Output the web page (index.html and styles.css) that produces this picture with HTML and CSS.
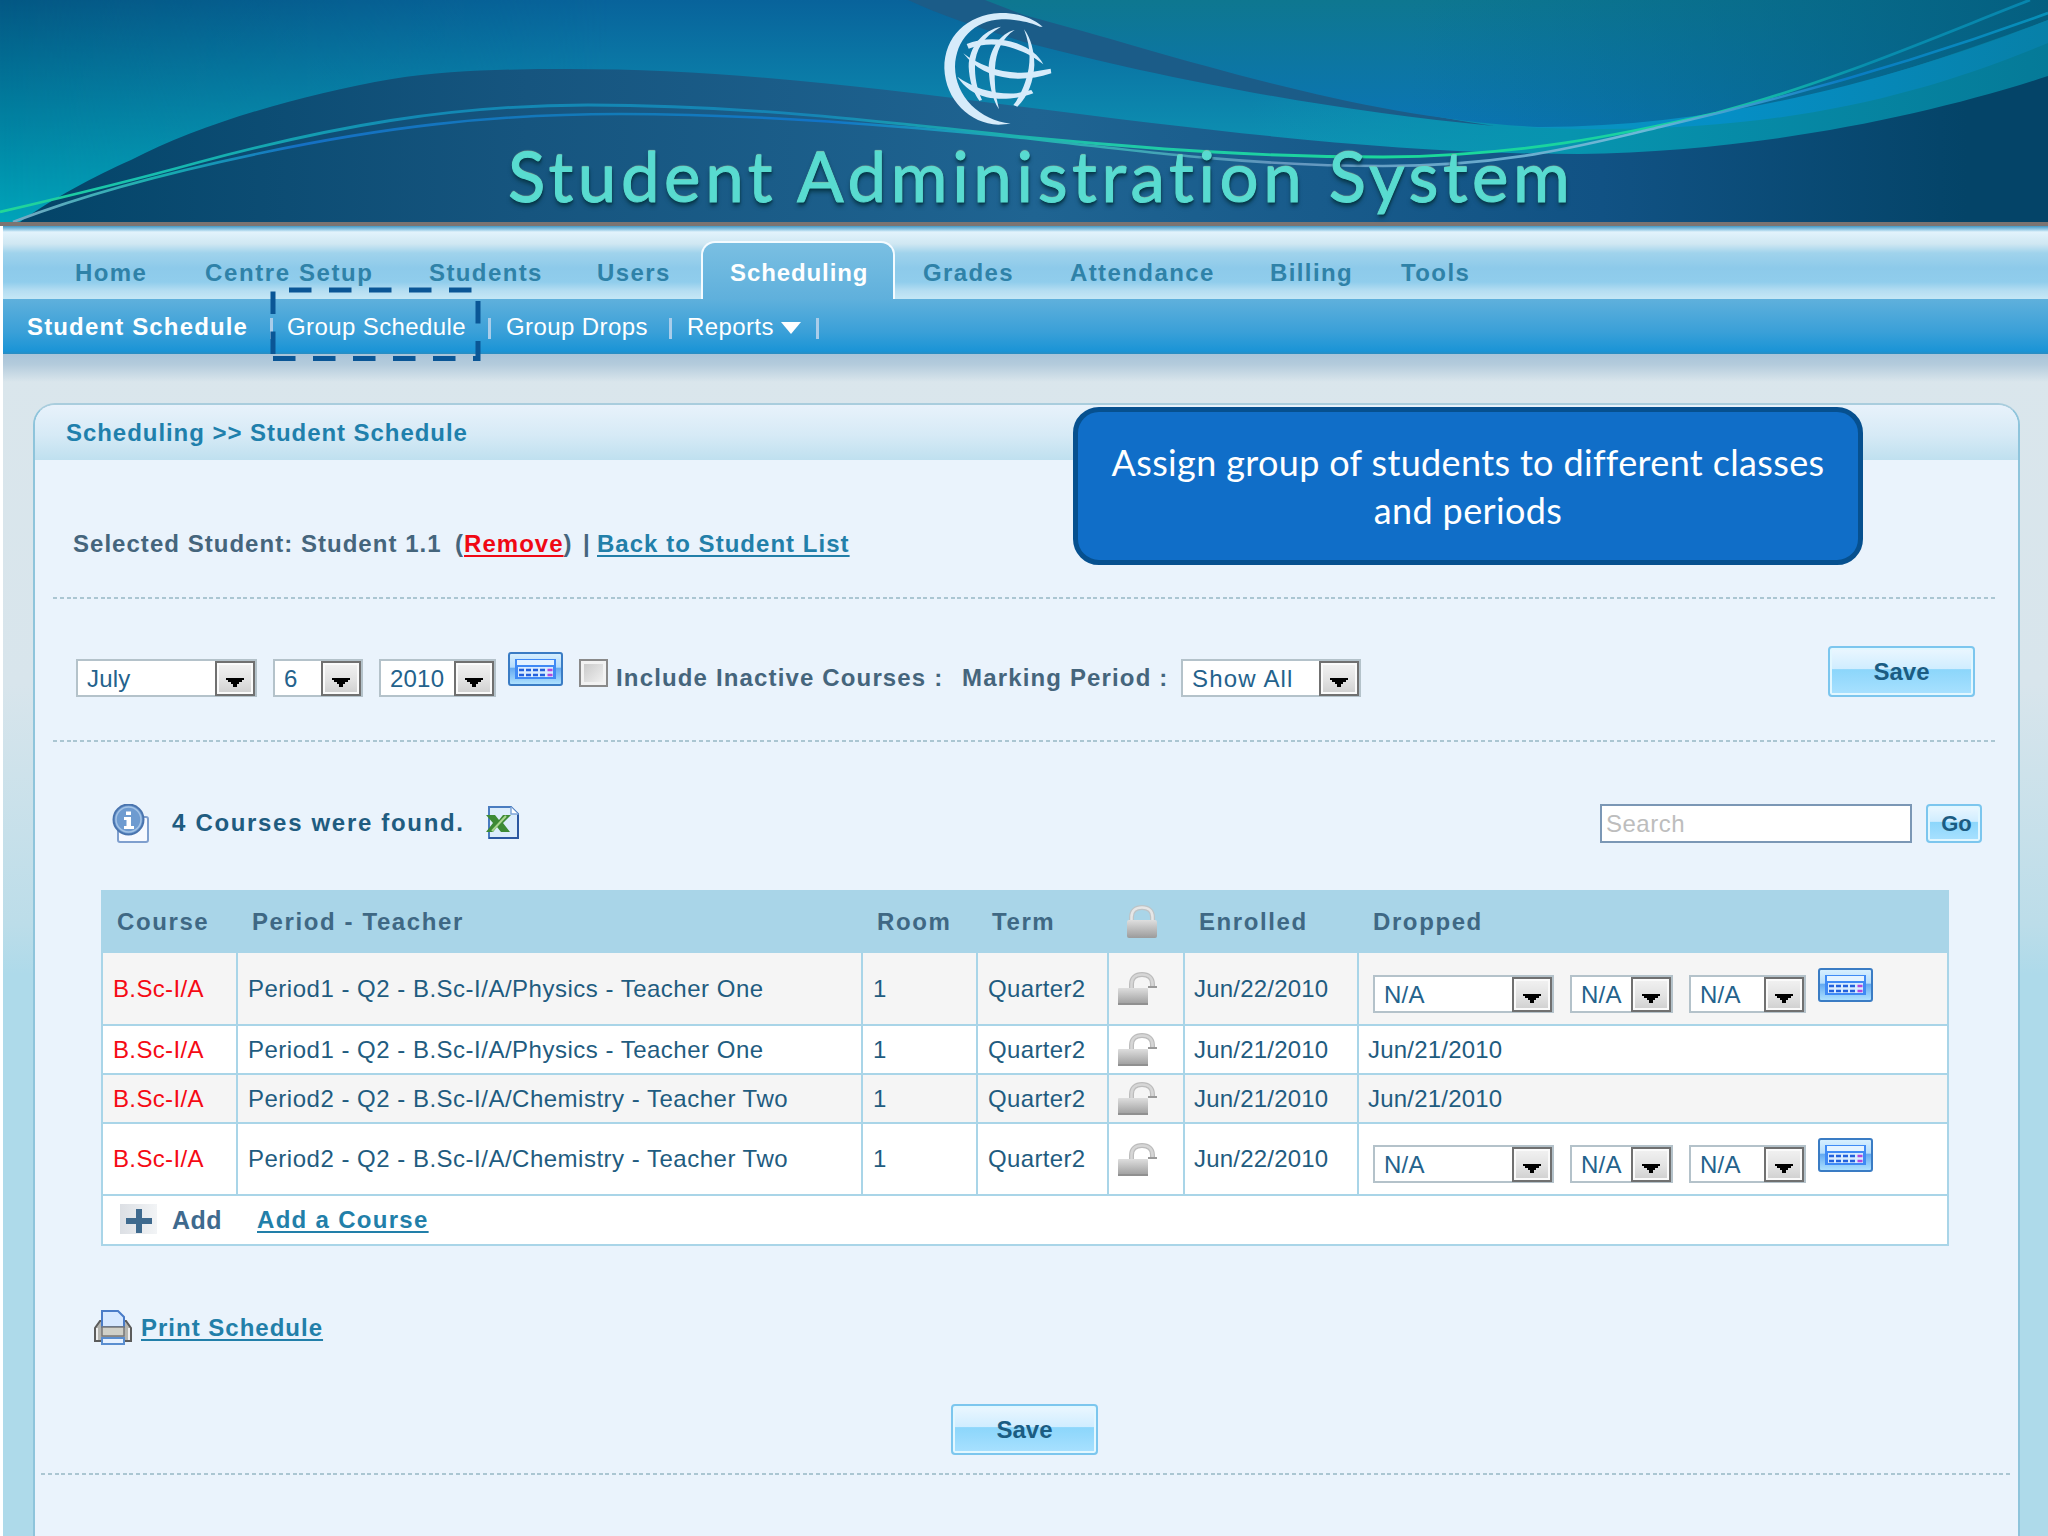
FILE: index.html
```html
<!DOCTYPE html>
<html>
  <head>
    <meta charset="utf-8">
    <title>Student Administration System</title>
    <link rel="stylesheet" href="styles.css">
  </head>
  <body>
    <!-- shared icons -->
    <svg class="symbols" width="0" height="0">
      <defs>
        <linearGradient id="grey" x1="0" y1="0" x2="0" y2="1">
          <stop offset="0" stop-color="#dedede"/><stop offset="1" stop-color="#9b9b9b"/>
        </linearGradient>
        <linearGradient id="glass" x1="0" y1="0" x2="0" y2="1">
          <stop offset="0" stop-color="#d8f0ff"/><stop offset="0.45" stop-color="#b4dcfb"/>
          <stop offset="0.46" stop-color="#62a8f0"/><stop offset="1" stop-color="#b2e4ff"/>
        </linearGradient>
        <symbol id="calendar" viewBox="0 0 55 34">
          <rect x="1" y="1" width="53" height="32" rx="2" fill="url(#glass)" stroke="#3a7cc4" stroke-width="2"/>
          <rect x="7" y="7" width="41" height="20" fill="#3f8af5"/>
          <rect x="9" y="8" width="37" height="5" fill="#e4f3ff"/>
          <rect x="10" y="15" width="35" height="10" fill="#d9ecff"/>
          <path d="M11 18h28M11 23h28" stroke="#2360dc" stroke-width="2.6" stroke-dasharray="5 2"/>
          <path d="M39.500 18h5M39.500 23h5" stroke="#b048dc" stroke-width="2.6"/>
        </symbol>
        <symbol id="down" viewBox="0 0 18 10">
          <path d="M0 0h18v2h-2v2h-3v2h-2v3h-4v-3h-2v-2h-3v-2h-2z" fill="#000"/>
        </symbol>
        <symbol id="unlock" viewBox="0 0 39 33">
          <path d="M13.500 17v-5c0-6 4-9.500 10.500-9.500s10.500 3.500 10.500 9.500v3" fill="none" stroke="#bcbcbc" stroke-width="5"/>
          <path d="M13.500 16v-4c0-6 4-9.500 10.500-9.500s10.500 3.500 10.500 9.500v2" fill="none" stroke="#d6d6d6" stroke-width="2.500"/>
          <path d="M30 15h9" stroke="#999" stroke-width="2"/>
          <rect x="0" y="16" width="30" height="17" rx="1" fill="url(#grey)"/>
          <path d="M0 32h30" stroke="#909090" stroke-width="2"/>
        </symbol>
      </defs>
    </svg>

    <div class="banner">
      <svg class="waves" viewBox="0 0 2048 222" width="2048" height="222">
        <defs>
          <linearGradient id="sky" x1="0" y1="0" x2="0.15" y2="1">
            <stop offset="0" stop-color="#045884"/><stop offset="1" stop-color="#00a6bb"/>
          </linearGradient>
          <linearGradient id="skyMid" x1="0" y1="0" x2="0" y2="1">
            <stop offset="0" stop-color="#08639b"/><stop offset="0.7" stop-color="#0e94b4"/>
          </linearGradient>
          <linearGradient id="fade" x1="0" y1="0" x2="1" y2="0">
            <stop offset="0" stop-color="#fff" stop-opacity="0"/><stop offset="0.3" stop-color="#fff"/>
          </linearGradient>
          <mask id="fadeMask"><rect width="2048" height="222" fill="url(#fade)"/></mask>
          <linearGradient id="hill" x1="0" y1="0" x2="1" y2="0">
            <stop offset="0" stop-color="#034468"/><stop offset="0.25" stop-color="#16557f"/>
            <stop offset="0.5" stop-color="#1f6492"/><stop offset="0.78" stop-color="#115284"/>
            <stop offset="0.96" stop-color="#044468"/><stop offset="1" stop-color="#044468"/>
          </linearGradient>
          <linearGradient id="top" x1="0" y1="0" x2="0" y2="1">
            <stop offset="0" stop-color="#0e7790"/><stop offset="1" stop-color="#0b75b5"/>
          </linearGradient>
          <linearGradient id="topRight" x1="0" y1="0" x2="1" y2="0">
            <stop offset="0.4" stop-color="#046a90" stop-opacity="0"/><stop offset="1" stop-color="#045f80"/>
          </linearGradient>
          <linearGradient id="blueBand" x1="0" y1="0" x2="1" y2="0">
            <stop offset="0" stop-color="#0b94bd"/><stop offset="0.4" stop-color="#058fc6"/><stop offset="1" stop-color="#0780a8"/>
          </linearGradient>
          <linearGradient id="tealBand" x1="0" y1="0" x2="1" y2="0">
            <stop offset="0" stop-color="#0c97b5" stop-opacity="0"/><stop offset="0.4" stop-color="#0794af"/><stop offset="1" stop-color="#057a98"/>
          </linearGradient>
          <linearGradient id="line1" x1="0" y1="0" x2="1" y2="0">
            <stop offset="0" stop-color="#22d897"/><stop offset="0.07" stop-color="#17c0ae"/>
            <stop offset="0.2" stop-color="#1289b4"/><stop offset="0.4" stop-color="#1585b5"/>
            <stop offset="0.55" stop-color="#1fc9a8"/><stop offset="0.7" stop-color="#1bd99a"/>
            <stop offset="0.84" stop-color="#18cfa4"/><stop offset="0.92" stop-color="#078eae"/>
            <stop offset="1" stop-color="#0786ae"/>
          </linearGradient>
          <linearGradient id="line2" x1="0" y1="0" x2="1" y2="0">
            <stop offset="0" stop-color="#79a9c4"/><stop offset="0.07" stop-color="#17b0ae"/>
            <stop offset="0.14" stop-color="#1570c4"/><stop offset="0.3" stop-color="#127bb8"/>
            <stop offset="0.4" stop-color="#1274c8"/><stop offset="0.5" stop-color="#1fb5b0"/>
            <stop offset="0.62" stop-color="#6495bd"/><stop offset="0.8" stop-color="#6dbad8"/>
            <stop offset="0.9" stop-color="#0a7cc4"/><stop offset="1" stop-color="#0690b8"/>
          </linearGradient>
        </defs>
        <rect width="2048" height="222" fill="url(#sky)"/>
        <rect width="2048" height="222" fill="url(#skyMid)" mask="url(#fadeMask)"/>
        <path d="M1250 222V60L2048 20V222Z" fill="url(#tealBand)"/>
        <path d="M908 0H1000L1024 15C1150 45 1320 100 1494 126C1320 110 1150 75 1024 42C980 28 940 15 908 0Z" fill="#1b5c88"/>
        <path d="M985 0L1024 15C1180 56 1380 128 1579 128C1740 126 1900 75 2048 20V0Z" fill="url(#top)"/>
        <path d="M985 0L1024 15C1180 56 1380 128 1579 128C1740 126 1900 75 2048 20V0Z" fill="url(#topRight)"/>
        <path d="M1500 126C1700 135 1900 78 2048 20V43C1900 105 1740 140 1500 126Z" fill="url(#blueBand)"/>
        <path d="M20 222C50 200 95 176 131 160C200 124 300 95 392 79C450 70 510 69 568 69C720 69 860 86 1024 107C1220 132 1400 154 1579 154C1750 152 1920 118 2048 76V222Z" fill="url(#hill)"/>
        <path d="M0 212C60 198 120 184 196 163C330 127 450 105 588 105C740 105 880 121 1024 137C1150 149 1260 157 1383 157C1520 156 1620 135 1716 113C1830 83 1940 35 2030 0" fill="none" stroke="url(#line1)" stroke-width="2.800"/>
        <path d="M13 222C80 196 170 172 261 153C380 128 490 114 620 114C760 114 900 126 1024 138C1150 153 1260 166 1383 166C1510 166 1590 144 1664 126C1790 97 1920 60 2048 13" fill="none" stroke="url(#line2)" stroke-width="2.600"/>
      </svg>
      <svg class="globe" viewBox="0 0 480 420" width="160" height="140">
        <g fill="#d6ebfa">
          <path d="M368 80C330 48 285 38 240 39C140 44 73 110 73 205C76 300 150 372 235 374L272 371C180 360 106 290 105 200C108 120 160 62 245 58C295 58 335 68 360 80Z"/>
          <path d="M243 80C190 90 146 140 146 200C148 240 158 275 178 302L186 300C170 265 164 230 165 195C166 150 190 110 243 80Z"/>
          <path d="M284 90C240 100 207 150 206 205C208 250 215 295 237 328C226 285 222 245 225 205C228 155 245 115 284 90Z"/>
          <path d="M312 88C328 130 332 165 326 205C318 250 300 290 280 315L292 320C325 290 341 240 343 195C343 155 333 115 312 88Z"/>
          <path d="M140 132C180 115 240 112 290 130C330 145 355 165 370 193C335 165 300 150 270 142C230 130 190 130 146 146Z"/>
          <path d="M130 160C180 200 260 225 330 217L392 206L394 220C350 235 310 238 270 235C210 228 165 205 130 160Z"/>
          <path d="M112 230C160 265 230 285 290 280L334 270L340 280C290 298 240 300 200 292C160 280 135 265 112 230Z"/>
        </g>
      </svg>
      <h1 class="brand">Student Administration System</h1>
    </div>

    <div class="page">
      <div class="nav">
        <a>Home</a><a class="centre">Centre Setup</a><a>Students</a><a>Users</a><a class="current">Scheduling</a><a>Grades</a><a>Attendance</a><a>Billing</a><a>Tools</a>
      </div>
      <div class="subnav">
        <b class="student">Student Schedule</b><i></i>
        <span class="group">Group Schedule</span><i></i>
        <span class="drops">Group Drops</span><i></i>
        <span class="reports">Reports</span>
        <svg width="20" height="12" viewBox="0 0 20 12"><path d="M0 0h20l-10 12z" fill="#fff"/></svg><i></i>
        <svg class="marker" width="215" height="80" viewBox="268 285 215 80">
          <path d="M273 358.500H478V290H273Z" fill="none" stroke="#0a5696" stroke-width="5" stroke-dasharray="22.500 17.500"/>
        </svg>
      </div>

      <div class="main">
        <div class="panel">
          <div class="panel-head">Scheduling &gt;&gt; Student Schedule</div>

          <div class="selected">
            <span class="who">Selected Student: Student 1.1</span>
            <span class="remove">(<a>Remove</a>)</span><span class="bar">|</span>
            <a class="back">Back to Student List</a>
          </div>
          <div class="dash"></div>

          <div class="filter">
            <div class="select month"><span>July</span><b><svg><use href="#down"/></svg></b></div>
            <div class="select day"><span>6</span><b><svg><use href="#down"/></svg></b></div>
            <div class="select year"><span>2010</span><b><svg><use href="#down"/></svg></b></div>
            <svg class="cal"><use href="#calendar"/></svg>
            <div class="check"></div>
            <span class="label inactive">Include Inactive Courses :</span>
            <span class="label marking">Marking Period :</span>
            <div class="select show"><span>Show All</span><b><svg><use href="#down"/></svg></b></div>
            <button class="save">Save</button>
          </div>
          <div class="dash"></div>

          <div class="found">
            <svg class="info" width="38" height="40" viewBox="0 0 38 40">
              <rect x="6" y="13" width="30" height="25" rx="2" fill="#f6f9ff" stroke="#7f9fce" stroke-width="2"/>
              <circle cx="16.500" cy="15.500" r="15" fill="#6e9bd0" stroke="#4a74ae" stroke-width="2"/>
              <circle cx="16.500" cy="15.500" r="12.500" fill="none" stroke="#a4c3e6" stroke-width="1.500"/>
              <path d="M14 7.500h5v3.500h-5zM12 13h7v9h3v3h-10v-3h2.500v-6h-2.500z" fill="#fff"/>
            </svg>
            <span class="count">4 Courses were found.</span>
            <svg class="excel" width="33" height="33" viewBox="0 0 33 33">
              <path d="M3 1h22l7 7v24h-29z" fill="#dcecfb" stroke="#4a7cc0" stroke-width="2"/>
              <path d="M25 1v7h7" fill="#fff" stroke="#7fa5d8" stroke-width="1.500"/>
              <path d="M32 9v23H3" fill="none" stroke="#2c57a0" stroke-width="2"/>
              <path d="M0 9h9l4 5 4-5h8l-8 8 7 9h-9l-4-5-4 5h-7l7-9z" fill="#3d8a35"/>
              <path d="M20 10l-14 15" stroke="#a9d68f" stroke-width="2"/>
            </svg>
            <input class="search" type="text" placeholder="Search">
            <button class="go">Go</button>
          </div>

          <table class="courses">
            <colgroup><col class="c1"><col class="c2"><col class="c3"><col class="c4"><col class="c5"><col class="c6"><col class="c7"></colgroup>
            <tr class="head">
              <th>Course</th><th>Period - Teacher</th><th>Room</th><th>Term</th>
              <th class="lock"><svg width="32" height="34" viewBox="0 0 32 34">
                <path d="M5.500 17v-5c0-6 4-9.500 10.500-9.500s10.500 3.500 10.500 9.500v5" fill="none" stroke="#bdc4c7" stroke-width="5"/>
                <path d="M5.500 16v-4c0-6 4-9.500 10.500-9.500s10.500 3.500 10.500 9.500v4" fill="none" stroke="#e6e6e6" stroke-width="2.500"/>
                <rect x="1" y="15" width="30" height="18" rx="2" fill="url(#grey)"/>
              </svg></th>
              <th>Enrolled</th><th>Dropped</th>
            </tr>
            <tr class="tall odd">
              <td class="red">B.Sc-I/A</td><td class="period">Period1 - Q2 - B.Sc-I/A/Physics - Teacher One</td><td>1</td><td>Quarter2</td>
              <td class="lock"><svg class="unlock"><use href="#unlock"/></svg></td><td class="date">Jun/22/2010</td>
              <td class="drop"><div class="dates">
                <div class="select m"><span>N/A</span><b><svg><use href="#down"/></svg></b></div>
                <div class="select d"><span>N/A</span><b><svg><use href="#down"/></svg></b></div>
                <div class="select y"><span>N/A</span><b><svg><use href="#down"/></svg></b></div>
                <svg class="cal"><use href="#calendar"/></svg>
              </div></td>
            </tr>
            <tr>
              <td class="red">B.Sc-I/A</td><td class="period">Period1 - Q2 - B.Sc-I/A/Physics - Teacher One</td><td>1</td><td>Quarter2</td>
              <td class="lock"><svg class="unlock"><use href="#unlock"/></svg></td><td class="date">Jun/21/2010</td><td class="date">Jun/21/2010</td>
            </tr>
            <tr class="odd">
              <td class="red">B.Sc-I/A</td><td class="period">Period2 - Q2 - B.Sc-I/A/Chemistry - Teacher Two</td><td>1</td><td>Quarter2</td>
              <td class="lock"><svg class="unlock"><use href="#unlock"/></svg></td><td class="date">Jun/21/2010</td><td class="date">Jun/21/2010</td>
            </tr>
            <tr class="tall">
              <td class="red">B.Sc-I/A</td><td class="period">Period2 - Q2 - B.Sc-I/A/Chemistry - Teacher Two</td><td>1</td><td>Quarter2</td>
              <td class="lock"><svg class="unlock"><use href="#unlock"/></svg></td><td class="date">Jun/22/2010</td>
              <td class="drop"><div class="dates">
                <div class="select m"><span>N/A</span><b><svg><use href="#down"/></svg></b></div>
                <div class="select d"><span>N/A</span><b><svg><use href="#down"/></svg></b></div>
                <div class="select y"><span>N/A</span><b><svg><use href="#down"/></svg></b></div>
                <svg class="cal"><use href="#calendar"/></svg>
              </div></td>
            </tr>
            <tr class="add">
              <td colspan="7"><div class="add-row">
                <span class="plus"><svg width="26" height="24" viewBox="0 0 26 24"><path d="M13 0v24M0 12h26" stroke="#3f6a8e" stroke-width="6"/></svg></span>
                <b>Add</b><a>Add a Course</a>
              </div></td>
            </tr>
          </table>

          <div class="print">
            <svg width="38" height="35" viewBox="0 0 38 35">
              <path d="M1 18l5-7h26l5 7v13h-36z" fill="#b5b5b0" stroke="#5c5c5c" stroke-width="2"/>
              <path d="M8 17V1h16l6 6v10z" fill="#d6e8ff" stroke="#4a7cc8" stroke-width="2"/>
              <path d="M8 17h22v9h-22z" fill="#d0d0c8" stroke="#777" stroke-width="1.500"/>
              <path d="M3 18v12M35 18v12" stroke="#eee" stroke-width="2"/>
              <path d="M8 28h22v6h-22z" fill="#e6f1ff" stroke="#5a8ed0" stroke-width="2"/>
            </svg>
            <a>Print Schedule</a>
          </div>
          <div class="bottom"><button class="save">Save</button></div>
          <div class="dash wide"></div>
        </div>
        <div class="callout">Assign group of students to different classes and periods</div>
      </div>
    </div>
  </body>
</html>
```
FILE: styles.css
```css
* {
  box-sizing: border-box;
}
body {
  margin: 0;
  width: 2048px;
  height: 1536px;
  overflow: hidden;
  background: #fff;
  font-family: "Liberation Sans", Arial, sans-serif;
  font-size: 24px;
  line-height: 32px;
  color: #1f5c80;
}
svg {
  display: block;
  flex: none;
}
.symbols {
  position: absolute;
}

/* banner */
.banner {
  position: relative;
  height: 226px;
  border-bottom: 4px solid #7b7472;
}
.waves {
  position: absolute;
  left: 0;
  top: 0;
}
.globe {
  position: absolute;
  left: 920px;
  top: 0;
}
.brand {
  position: absolute;
  left: 508px;
  top: 132px;
  margin: 0;
  font-family: Lato, sans-serif;
  font-weight: 400;
  font-size: 69px;
  line-height: 88px;
  letter-spacing: 4.6px;
  white-space: nowrap;
  color: #58dbd0;
  -webkit-text-stroke: 1px #58dbd0;
  text-shadow: 0 -1px 1px #8fb39a, 1px 2px 2px #06384a, 0 4px 4px #0b3d52;
}

/* navigation */
.page {
  margin-left: 3px;
}
.nav {
  display: grid;
  grid-template-columns: 129px 225px 168px 132px 194px 147px 200px 131px 130px;
  padding-left: 44px;
  height: 73px;
  font-weight: bold;
  letter-spacing: 1.4px;
  color: #2f82a8;
  background: linear-gradient(#4297c4 0, #a5d2ea 4px, #e2f3fc 6px, #cfe7f2 18px, #a0d3ec 27px, #8dcaea 42px, #90cdec 56px, #b6def2 65px, #c3e6f5 72px);
}
.nav a {
  padding: 31px 0 0 28px;
  white-space: nowrap;
}
.nav .centre {
  padding-left: 29px;
  letter-spacing: 1.6px;
}
.nav .current {
  margin-top: 15px;
  padding: 14px 0 0 27px;
  border: 2px solid #f4fbff;
  border-bottom: 0;
  border-radius: 14px 14px 0 0;
  color: #fff;
  letter-spacing: 0.9px;
  background: linear-gradient(#7abfe2, #5fb0dc);
}
.subnav {
  position: relative;
  z-index: 1;
  display: flex;
  height: 55px;
  padding: 12px 0 0 24px;
  color: #fff;
  letter-spacing: 0.4px;
  white-space: nowrap;
  background: linear-gradient(#5fb0dc, #3aa0d8 60%, #1a94d6 95%, #2b8cc0);
}
.subnav i {
  width: 3px;
  height: 21px;
  margin-top: 7px;
  background: #a9cdea;
}
.subnav svg {
  margin: 11px 15px 0 0;
}
.subnav .marker {
  position: absolute;
  left: 265px;
  top: -14px;
  margin: 0;
}
.student {
  width: 243px;
  letter-spacing: 1.15px;
}
.group {
  width: 215px;
  padding-left: 14px;
}
.drops {
  width: 178px;
  padding-left: 15px;
}
.reports {
  width: 109px;
  padding-left: 15px;
}

/* content */
.main {
  position: relative;
  height: 1182px;
  padding: 49px 28px 0 30px;
  background:
    linear-gradient(#a9c4d9 0, #b3cbdc 10px, rgba(217, 230, 236, 0) 28px),
    linear-gradient(#dae6ec 0, #d8e5ec 330px, #bcdde9 570px, #aedaea 620px);
}
.panel {
  height: 1133px;
  border: 2px solid #8ec4db;
  border-top-color: #a9cddd;
  border-bottom: 0;
  border-radius: 22px 22px 0 0;
  background: #eaf3fc;
}
.panel-head {
  height: 55px;
  padding: 12px 0 0 31px;
  border-radius: 20px 20px 0 0;
  font-weight: bold;
  letter-spacing: 0.95px;
  color: #1f80ac;
  background: linear-gradient(#e8f2fb, #d6eaf6 55%, #bfe0ef);
}
.panel a {
  color: #227fa9;
  text-decoration: underline;
  text-decoration-thickness: 2px;
  text-underline-offset: 3px;
}
.dash {
  height: 2px;
  margin: 0 20px 0 18px;
  background: repeating-linear-gradient(90deg, #abc6d2 0 4px, transparent 4px 6.800px);
}
.dash.wide {
  margin: 0 8px 0 6px;
}
.selected {
  display: flex;
  height: 137px;
  padding: 68px 0 0 38px;
  font-weight: bold;
  letter-spacing: 1.03px;
  color: #45657c;
  white-space: nowrap;
}
.selected .who {
  width: 382px;
}
.selected .remove {
  width: 128px;
}
.selected .remove a {
  color: #f00814;
}
.selected .bar {
  width: 14px;
}

/* form parts */
.filter {
  display: flex;
  align-items: flex-start;
  height: 141px;
  padding: 60px 43px 0 41px;
}
.select {
  display: flex;
  flex: none;
  height: 38px;
  border: 2px solid #b4c2ca;
  background: #fff;
}
.select span {
  flex: 1;
  padding: 2px 0 0 9px;
  white-space: nowrap;
  letter-spacing: 0.2px;
  color: #24628c;
}
.select b {
  width: 40px;
  height: 35px;
  padding: 15px 0 0 9px;
  border: 2px solid #707070;
  background: linear-gradient(#f2f2f2, #e2e2e2 55%, #cfcfcf);
  box-shadow: inset 0 0 0 2px #fafafa;
}
.select b svg {
  width: 18px;
  height: 10px;
}
.month {
  width: 181px;
  margin-right: 16px;
}
.day {
  width: 90px;
  margin-right: 16px;
}
.year {
  width: 117px;
  margin-right: 12px;
}
.cal {
  width: 55px;
  height: 34px;
  margin-top: -7px;
}
.check {
  width: 29px;
  height: 28px;
  margin: 0 8px 0 16px;
  border: 2px solid #8a8a8a;
  background: linear-gradient(135deg, #c4c4c4, #f6f6f6);
  box-shadow: inset 0 0 0 3px #f2f2f2;
}
.label {
  padding-top: 3px;
  font-weight: bold;
  letter-spacing: 1.15px;
  color: #45657c;
  white-space: nowrap;
}
.inactive {
  width: 346px;
}
.marking {
  width: 219px;
}
.show {
  width: 180px;
}
.show span {
  letter-spacing: 1.2px;
}
button {
  border: 2px solid #7cc6ee;
  border-radius: 4px;
  padding: 0;
  font: bold 24px "Liberation Sans", Arial, sans-serif;
  color: #1b5c82;
  background: linear-gradient(#ebf7ff, #d0edff 44%, #8cd6fb 46%, #a9e1ff);
  box-shadow: inset 0 0 0 2px #e2f7ff;
}
.save {
  width: 147px;
  height: 51px;
}
.filter .save {
  margin: -13px 0 0 auto;
}
.found {
  display: flex;
  height: 148px;
  padding: 62px 36px 0 77px;
}
.count {
  margin-left: 22px;
  padding-top: 3px;
  width: 314px;
  font-weight: bold;
  letter-spacing: 1.68px;
  white-space: nowrap;
}
.excel {
  margin-top: 2px;
}
.search {
  width: 312px;
  height: 39px;
  margin-left: auto;
  padding: 0 4px;
  border: 2px solid #7b97b5;
  font: 24px "Liberation Sans", Arial, sans-serif;
  letter-spacing: 0.5px;
}
.search::placeholder {
  color: #bdbdbd;
}
.go {
  width: 56px;
  height: 39px;
  margin-left: 14px;
  padding-left: 5px;
  font-size: 22px;
}

/* course table */
.courses {
  table-layout: fixed;
  width: 1848px;
  margin-left: 66px;
  border-collapse: separate;
  border-spacing: 0;
  background: #fff;
}
.c1 { width: 135px; }
.c2 { width: 625px; }
.c3 { width: 115px; }
.c4 { width: 131px; }
.c5 { width: 76px; }
.c6 { width: 174px; }
.c7 { width: 592px; }
.courses th {
  height: 63px;
  padding: 0 0 0 16px;
  text-align: left;
  letter-spacing: 1.6px;
  color: #3f6884;
  background: #a9d5e8;
}
.courses td {
  height: 49px;
  padding: 0 0 0 10px;
  border-left: 2px solid #a9d5e8;
  border-bottom: 2px solid #a9d5e8;
  letter-spacing: 0.35px;
  white-space: nowrap;
}
.courses td:last-child {
  border-right: 2px solid #a9d5e8;
}
.courses .period {
  letter-spacing: 0.5px;
}
.courses .date {
  padding-left: 9px;
  letter-spacing: 0.2px;
}
.courses .odd td {
  background: #f5f5f5;
}
.courses .tall td {
  height: 72px;
}
.courses .tall.odd td {
  height: 73px;
}
.courses .red {
  color: #f50a14;
}
.courses th.lock {
  padding-left: 19px;
}
.courses td.lock {
  padding-left: 9px;
}
.unlock {
  width: 39px;
  height: 33px;
}
.courses .drop {
  padding-left: 14px;
}
.dates {
  display: flex;
  align-items: flex-start;
  height: 38px;
  margin-top: 10px;
}
.dates .m {
  width: 181px;
  margin-right: 16px;
}
.dates .d {
  width: 103px;
  margin-right: 16px;
}
.dates .y {
  width: 117px;
  margin-right: 12px;
}
.courses .add td {
  height: 50px;
  padding: 0;
}
.add-row {
  display: flex;
  padding-left: 17px;
}
.plus {
  width: 37px;
  height: 30px;
  padding: 5px 0 0 6px;
  background: linear-gradient(90deg, #dcdfe4, #f2f4f6);
}
.add-row b {
  width: 100px;
  padding-left: 15px;
  font-size: 25px;
  letter-spacing: 0.5px;
  color: #3f6a8e;
}
.add-row a {
  letter-spacing: 1.3px;
  font-weight: bold;
}
.print {
  display: flex;
  gap: 9px;
  height: 158px;
  padding: 64px 0 0 59px;
  font-weight: bold;
  letter-spacing: 1px;
}
.print a {
  padding-top: 2px;
}
.bottom {
  height: 69px;
  padding-left: 916px;
}

/* slide note over the panel */
.callout {
  position: absolute;
  left: 1070px;
  top: 53px;
  width: 790px;
  height: 158px;
  padding: 27px 20px 0;
  border: 5px solid #06508f;
  border-radius: 26px;
  background: #106ec8;
  font-family: Lato, sans-serif;
  font-size: 36px;
  line-height: 47.500px;
  letter-spacing: 0.35px;
  text-align: center;
  color: #fff;
}
```
